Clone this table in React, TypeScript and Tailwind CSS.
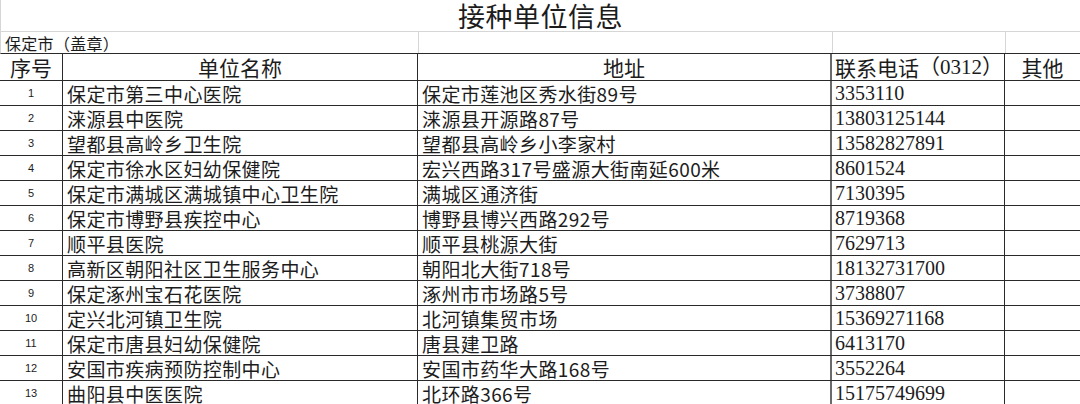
const rows = [
  ["1", "保定市第三中心医院", "保定市莲池区秀水街89号", "3353110"],
  ["2", "涞源县中医院", "涞源县开源路87号", "13803125144"],
  ["3", "望都县高岭乡卫生院", "望都县高岭乡小李家村", "13582827891"],
  ["4", "保定市徐水区妇幼保健院", "宏兴西路317号盛源大街南延600米", "8601524"],
  ["5", "保定市满城区满城镇中心卫生院", "满城区通济街", "7130395"],
  ["6", "保定市博野县疾控中心", "博野县博兴西路292号", "8719368"],
  ["7", "顺平县医院", "顺平县桃源大街", "7629713"],
  ["8", "高新区朝阳社区卫生服务中心", "朝阳北大街718号", "18132731700"],
  ["9", "保定涿州宝石花医院", "涿州市市场路5号", "3738807"],
  ["10", "定兴北河镇卫生院", "北河镇集贸市场", "15369271168"],
  ["11", "保定市唐县妇幼保健院", "唐县建卫路", "6413170"],
  ["12", "安国市疾病预防控制中心", "安国市药华大路168号", "3552264"],
  ["13", "曲阳县中医医院", "北环路366号", "15175749699"],
];

const cjk = "font-['Noto_Sans_CJK_SC',sans-serif]";
const serif = "font-['Liberation_Serif','Noto_Sans_CJK_SC',serif]";

export default function App() {
  return (
    <div className={`w-[1080px] h-[404px] overflow-hidden bg-white text-[#1c1c1c] ${cjk}`}>
      {/* title */}
      <div className="h-[32px] border-l border-b border-[#d6d6d6] flex items-center justify-center">
        <span className="text-[27px] leading-[32px] tracking-[0.5px]">接种单位信息</span>
      </div>

      {/* stamp row */}
      <div className="h-[22px] flex border-l border-b border-b-[#2a2a2a] border-l-[#d6d6d6]">
        <div className="w-[418px] border-r border-[#d6d6d6] flex items-center pl-[4px] text-[16px] leading-none tracking-[0.3px]">
          保定市（盖章）
        </div>
        <div className="w-[414px] border-r border-[#d6d6d6]" />
        <div className="w-[173px] border-r border-[#d6d6d6]" />
        <div className="flex-1" />
      </div>

      {/* header */}
      <div className="h-[27px] flex border-b border-[#2a2a2a] text-[21px] leading-none">
        <div className="w-[63px] border-r border-[#2a2a2a] flex items-center justify-center">序号</div>
        <div className="w-[355px] border-r border-[#2a2a2a] flex items-center justify-center">单位名称</div>
        <div className="w-[414px] border-r-2 border-[#6a6a6a] flex items-center justify-center">地址</div>
        <div className={`w-[173px] border-r border-[#2a2a2a] flex items-center pl-[3px] ${serif}`}>
          <span className={cjk}>联系电话</span>（0312）
        </div>
        <div className="flex-1 flex items-center justify-center">其他</div>
      </div>

      {rows.map((r) => (
        <div key={r[0]} className="h-[25px] flex border-b border-[#2a2a2a]">
          <div className="w-[63px] border-r border-[#2a2a2a] flex items-center justify-center text-[11px] font-['Liberation_Sans',sans-serif] pt-[1px]">
            {r[0]}
          </div>
          <div className="w-[355px] border-r border-[#2a2a2a] flex items-center pl-[4px] text-[19px] leading-none tracking-[0.4px]">
            {r[1]}
          </div>
          <div className="w-[414px] border-r-2 border-[#6a6a6a] flex items-center pl-[4px] text-[19px] leading-none tracking-[0.4px]">
            {r[2]}
          </div>
          <div className={`w-[173px] border-r border-[#2a2a2a] flex items-center pl-[3px] text-[20px] leading-none ${serif}`}>
            {r[3]}
          </div>
          <div className="flex-1" />
        </div>
      ))}
    </div>
  );
}
